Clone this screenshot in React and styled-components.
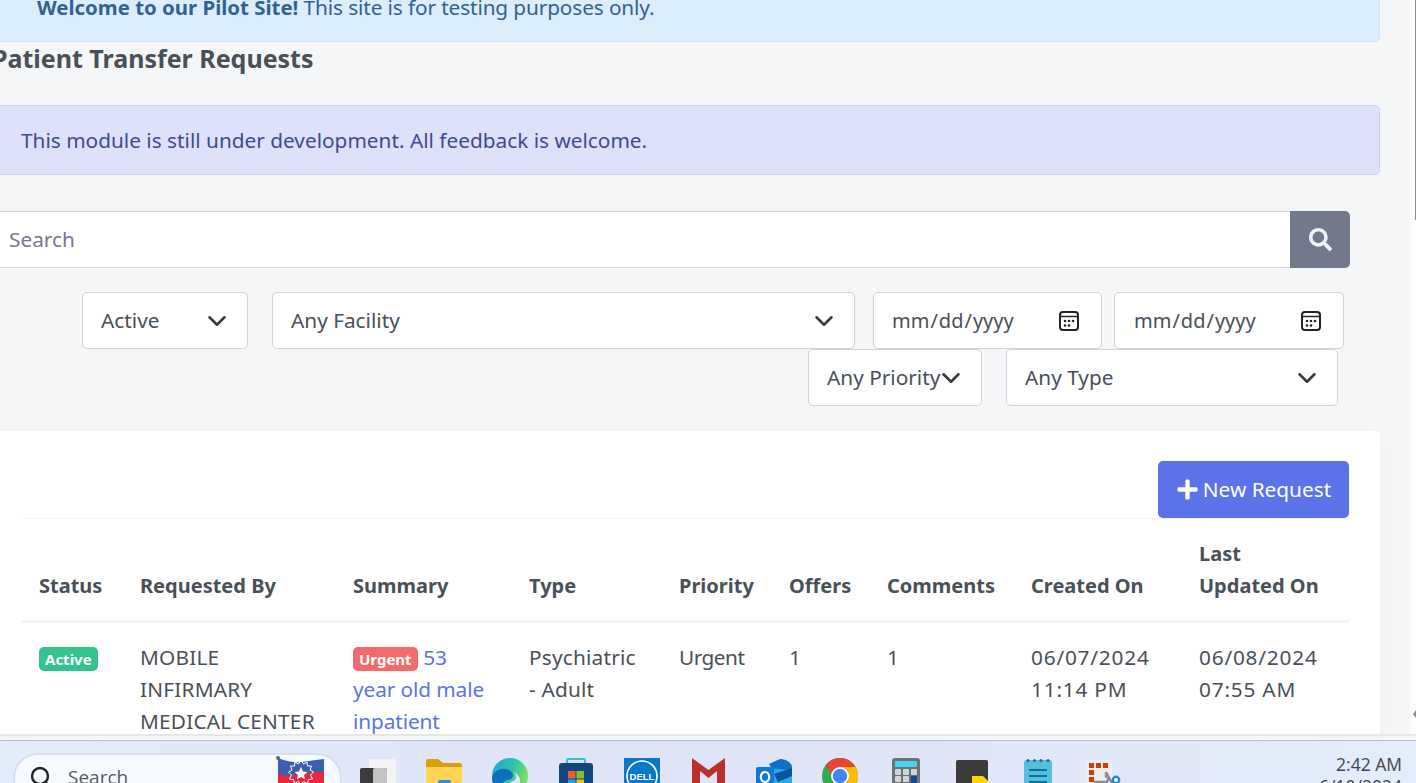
import React from 'react'
import styled, {createGlobalStyle} from 'styled-components'
import {FaSearch, FaPlus} from 'react-icons/fa'

const chevron = "data:image/svg+xml,%3csvg xmlns='http://www.w3.org/2000/svg' viewBox='0 0 16 16'%3e%3cpath fill='none' stroke='%23343a40' stroke-linecap='round' stroke-linejoin='round' stroke-width='2' d='m2 5 6 6 6-6'/%3e%3c/svg%3e"
const calendar = "data:image/svg+xml,%3csvg xmlns='http://www.w3.org/2000/svg' viewBox='0 0 20 20'%3e%3crect x='1' y='1' width='18' height='18' rx='3' fill='none' stroke='%23222' stroke-width='2'/%3e%3cpath d='M1 5.500h18' stroke='%23222' stroke-width='1.600'/%3e%3cg fill='%23222'%3e%3ccircle cx='6' cy='10' r='1.300'/%3e%3ccircle cx='10' cy='10' r='1.300'/%3e%3ccircle cx='14' cy='10' r='1.300'/%3e%3ccircle cx='6' cy='14.500' r='1.300'/%3e%3ccircle cx='10' cy='14.500' r='1.300'/%3e%3c/g%3e%3c/svg%3e"

const GlobalStyle = createGlobalStyle`
  html, body { margin: 0; padding: 0; overflow: hidden; background: #f5f6f8; }
  * { box-sizing: border-box; }
  body { font-family: "Noto Sans", "Liberation Sans", sans-serif; font-size: 20.800px; line-height: 32px; color: #495057; }
`

const Screen = styled.div`
  width: 1416px;
  height: 783px;
  display: flex;
  flex-direction: column;
  overflow: hidden;
`

const Viewport = styled.div`
  height: 736px;
  flex: none;
  display: flex;
  border-bottom: 2px solid #e7e7e7;
  background: #f5f6f8;
`

const Page = styled.main`
  width: 1410px;
  flex: none;
  overflow: hidden;
`

const Scrollbar = styled.div`
  flex: 1;
  background: #fdfdfd;
  display: flex;
  flex-direction: column;
  align-items: flex-end;
`

const Thumb = styled.div`
  width: 1px;
  height: 220px;
  background: #8b8b8b;
`

const ScrollArrow = styled.div`
  margin-top: 490px;
  width: 0;
  height: 0;
  border-top: 4px solid transparent;
  border-bottom: 4px solid transparent;
  border-right: 3px solid #8b8b8b;
`

const Content = styled.div`
  width: 1400px;
  margin: -28px 0 0 -20px;
`

const Alert = styled.div`
  height: 70px;
  padding: 18px 20px 18px ${p => p.$indent}px;
  border: 1px solid ${p => p.$border};
  border-radius: 5px;
  background: ${p => p.$bg};
  color: ${p => p.$color};
  letter-spacing: ${p => p.$track || 0}px;
  b { font-weight: 700; font-size: 20.400px; letter-spacing: 0; }
`

const Title = styled.h4`
  margin: -1px 0 30px 12px;
  height: 34px;
  font-size: 25px;
  line-height: 34px;
  font-weight: 700;
  color: #495057;
`

const SearchBar = styled.div`
  display: flex;
  height: 57px;
  margin: 36px 30px 0 0;
`

const SearchInput = styled.input`
  flex: 1;
  min-width: 0;
  padding: 0 0 2px 28px;
  border: 1px solid #ced4da;
  border-right: 0;
  border-radius: 0;
  background: #fff;
  outline: none;
  font: inherit;
  &::placeholder { color: #74788d; opacity: 1; }
`

const SearchButton = styled.button`
  width: 60px;
  border: 0;
  border-radius: 0 5px 5px 0;
  background: #74788d;
  color: #eff2f7;
  font-size: 23px;
  display: flex;
  align-items: center;
  justify-content: center;
`

const FilterRow = styled.div`
  display: flex;
  justify-content: flex-end;
  height: 57px;
  padding-right: ${p => p.$right}px;
  margin-top: ${p => p.$top || 0}px;
`

const Select = styled.select`
  appearance: none;
  width: ${p => p.$w}px;
  margin-left: ${p => p.$ml || 0}px;
  padding: 0 0 2px 18px;
  border: 1px solid #ced4da;
  border-radius: 5px;
  background: #fff url("${chevron}") no-repeat right 20px center / 20px 20px;
  color: #495057;
  font: inherit;
  outline: none;
`

const DateInput = styled.input`
  width: ${p => p.$w}px;
  margin-left: ${p => p.$ml || 0}px;
  padding: 0 22px 0 ${p => p.$pl || 17}px;
  border: 1px solid #ced4da;
  border-radius: 5px;
  background: #fff;
  color: #495057;
  font: inherit;
  font-size: 20px;
  outline: none;
  &::-webkit-calendar-picker-indicator {
    width: 20px;
    height: 20px;
    padding: 0;
    margin: 0;
    background: url("${calendar}") no-repeat center / 20px 20px;
  }
`

const Card = styled.section`
  margin-top: 25px;
  padding: 30px 31px 30px 41px;
  background: #fff;
  border-radius: 5px;
  box-shadow: 0 12px 24px rgba(18, 38, 63, 0.03);
`

const Toolbar = styled.div`
  display: flex;
  justify-content: flex-end;
  border-bottom: 1px solid #f4f4f4;
`

const NewButton = styled.button`
  width: 191px;
  height: 57px;
  padding: 0 0 2px;
  border: 0;
  border-radius: 5px;
  background: #5b73e8;
  color: #fff;
  font: inherit;
  display: flex;
  align-items: center;
  justify-content: center;
  gap: 4px;
  svg { font-size: 23px; margin-top: 2px; }
`

const Table = styled.table`
  width: 100%;
  table-layout: fixed;
  border-collapse: collapse;
`

const Th = styled.th`
  padding: 19px 18px 18px;
  border-bottom: 3px solid #f4f4f4;
  vertical-align: bottom;
  text-align: left;
  font-size: 20px;
  font-weight: 700;
`

const Td = styled.td`
  padding: 18px 18px 20px;
  vertical-align: top;
  letter-spacing: ${p => p.$track ?? 0.2}px;
`

const Badge = styled.span`
  display: inline-block;
  height: 24px;
  padding: 0 6px;
  border-radius: 5px;
  background: ${p => p.$bg};
  color: #fff;
  font-size: 15px;
  line-height: 24px;
  font-weight: 700;
  letter-spacing: 0;
`

const SummaryLink = styled.a`
  color: #5b73e8;
  letter-spacing: -0.1px;
`

const Taskbar = styled.footer`
  flex: 1;
  margin-top: 4px;
  padding: 12px 14px 0 13px;
  display: flex;
  align-items: flex-start;
  overflow: hidden;
  border-top: 1px solid #b9bdcb;
  background: linear-gradient(90deg, #e3ecfb 0%, #dfe4f7 45%, #e0e6f8 65%, #e3edfb 100%);
`

const TaskSearch = styled.div`
  width: 329px;
  height: 50px;
  flex: none;
  padding: 9px 0 0 15px;
  display: flex;
  align-items: flex-start;
  border: 2px solid #d6deee;
  border-radius: 25px;
  background: #f6f9ff;
  color: #5a5a5a;
  font-family: "Open Sans", sans-serif;
  font-size: 19px;
  line-height: 26px;
`

const SearchLabel = styled.span`
  margin-left: 16px;
  flex: 1;
`

const TaskIcons = styled.div`
  margin-left: 3px;
  display: flex;
`

const TaskIcon = styled.div`
  width: 66px;
  height: 40px;
  margin-top: 5px;
  display: flex;
  justify-content: center;
  svg { display: block; flex: none; }
`

const Clock = styled.div`
  margin: 0 0 0 auto;
  text-align: right;
  font-family: "Open Sans", sans-serif;
  font-size: 17.500px;
  line-height: 22px;
  color: #444;
`

const SearchGlyph = () => (
  <svg width="22" height="26" viewBox="0 0 22 26" style={{marginTop: 1}}>
    <circle cx="10" cy="11" r="8" fill="none" stroke="#222" strokeWidth="2.400" />
    <path d="M15.500 17l4 5" stroke="#222" strokeWidth="2.600" strokeLinecap="round" />
  </svg>
)

const Flag = () => (
  <svg width="50" height="30" viewBox="0 0 50 30" style={{marginTop: -8, marginRight: 14}}>
    <circle cx="2" cy="2" r="2" fill="#6a6170" />
    <path d="M2 2C12 6 20 7 26 6s14-2 22-3v22H2z" fill="#3b5fae" />
    <path d="M2 18c8 2 14 2 24 0s16-2 22-2v14H2z" fill="#e8283f" />
    <path d="M25 4l2.500 4 3.500-2 .5 4 4 0-1.500 4 3.500 2-3 3 2 4-4 .5-1 4-4-2-2.500 3-2.500-3-4 2-1-4-4-.5 2-4-3-3 3.500-2-1.500-4 4 0 .5-4 3.500 2z" fill="none" stroke="#fff" strokeWidth="1" />
    <path d="M25 11l2 4.500 4.500.5-3.500 3 1 4.500-4-2.500-4 2.500 1-4.500-3.500-3 4.500-.5z" fill="#fff" />
  </svg>
)

const TaskViewIcon = () => (
  <svg width="36" height="36" viewBox="0 0 36 36">
    <rect x="9" y="1" width="27" height="28" rx="2" fill="#f4f4f5" />
    <rect x="0" y="10" width="27" height="26" rx="2" fill="#3c3c3c" />
    <rect x="13" y="10" width="14" height="26" rx="2" fill="#c3c3c3" />
  </svg>
)

const FolderIcon = () => (
  <svg width="36" height="36" viewBox="0 0 36 36">
    <path d="M0 3a2 2 0 0 1 2-2h10l5 4h17a2 2 0 0 1 2 2v6H0z" fill="#d9a008" />
    <path d="M0 9h36v25a2 2 0 0 1-2 2H2a2 2 0 0 1-2-2z" fill="#ffd456" />
    <rect x="12" y="22" width="13" height="14" rx="2" fill="#2b8fd8" />
  </svg>
)

const EdgeIcon = () => (
  <svg width="36" height="36" viewBox="0 0 36 36">
    <defs>
      <linearGradient id="edgeA" x1="0" y1="0" x2="1" y2="0.4">
        <stop offset="0" stopColor="#1aa7d8" />
        <stop offset="0.6" stopColor="#30c3a8" />
        <stop offset="1" stopColor="#7ade60" />
      </linearGradient>
    </defs>
    <circle cx="18" cy="18" r="18" fill="url(#edgeA)" />
    <path d="M0 20c2-8 10-11 17-8 4 2 5 6 3 8-3 3-8 1-9 6-1 4 3 9 8 10C8 36 0 29 0 20z" fill="#0f6fb8" />
    <path d="M21 14c3 1 4 6 2 8-3 3-8 2-8 6 0 3 5 6 10 6 4 0 8-2 10-5-4 2-10 3-12 1 3-2 5-4 5-8 0-3-3-7-7-8z" fill="#e3e6f7" />
  </svg>
)

const StoreIcon = () => (
  <svg width="36" height="36" viewBox="0 0 36 36">
    <path d="M9 6V2a1 1 0 0 1 1-1h16a1 1 0 0 1 1 1v4" fill="none" stroke="#2bc4ee" strokeWidth="2" />
    <rect x="1" y="5" width="34" height="31" rx="3" fill="#11467f" />
    <rect x="10" y="13" width="7.500" height="7.500" fill="#f25a29" />
    <rect x="18.500" y="13" width="7.500" height="7.500" fill="#7fc234" />
    <rect x="10" y="21.500" width="7.500" height="7.500" fill="#1ba4ec" />
    <rect x="18.500" y="21.500" width="7.500" height="7.500" fill="#fdb813" />
  </svg>
)

const DellIcon = () => (
  <svg width="36" height="36" viewBox="0 0 36 36">
    <rect width="36" height="36" fill="#0a78c9" />
    <circle cx="18" cy="18" r="15" fill="none" stroke="#fff" strokeWidth="1.600" />
    <text x="18" y="21.500" textAnchor="middle" fill="#fff" fontFamily="Liberation Sans, sans-serif" fontSize="9.500" fontWeight="700">DELL</text>
  </svg>
)

const MailIcon = () => (
  <svg width="33" height="36" viewBox="0 0 33 36">
    <path d="M0 0l16.500 12L33 0v36h-8V13l-8.500 7L8 13v23H0z" fill="#bb2f2c" />
  </svg>
)

const OutlookIcon = () => (
  <svg width="36" height="36" viewBox="0 0 36 36">
    <path d="M13 6L24 1c6 0 12 4 12 8v4L22 22z" fill="#0f6fc6" />
    <path d="M11 10L36 12v22H11z" fill="#27a9e6" />
    <path d="M18 16l18-6v8L22 24z" fill="#0b549f" />
    <rect x="0" y="9" width="18" height="20" rx="2" fill="#0f78d4" />
    <ellipse cx="9" cy="19" rx="4.200" ry="5" fill="none" stroke="#fff" strokeWidth="2.200" />
  </svg>
)

const ChromeIcon = () => (
  <svg width="36" height="36" viewBox="0 0 36 36">
    <circle cx="18" cy="18" r="18" fill="#34a853" />
    <path d="M18 0a18 18 0 0 1 15.600 9H18a9 9 0 0 0-8.700 7L3.500 7.200A18 18 0 0 1 18 0z" fill="#ea4335" />
    <path d="M33.600 9A18 18 0 0 1 18 36l7.800-13.500A9 9 0 0 0 18 9z" fill="#fbbc05" />
    <circle cx="18" cy="18" r="9" fill="#fff" />
    <circle cx="18" cy="18" r="7.200" fill="#4285f4" />
  </svg>
)

const CalculatorIcon = () => (
  <svg width="28" height="36" viewBox="0 0 28 36">
    <rect width="28" height="36" rx="3" fill="#6d7278" />
    <rect x="3" y="3" width="22" height="6" rx="1" fill="#45d4f5" />
    <g fill="#d2d4d7">
      <rect x="3" y="11" width="6" height="6" rx="1" />
      <rect x="11" y="11" width="6" height="6" rx="1" />
      <rect x="19" y="11" width="6" height="6" rx="1" />
      <rect x="3" y="18" width="6" height="6" rx="1" />
      <rect x="11" y="18" width="6" height="6" rx="1" />
    </g>
    <rect x="19" y="18" width="6" height="14" rx="1" fill="#0f4a94" />
  </svg>
)

const StickyIcon = () => (
  <svg width="32" height="36" viewBox="0 0 32 36">
    <rect y="2" width="32" height="34" rx="2" fill="#3b3b3b" />
    <path d="M16 18h11l5 5v13H16z" fill="#ffd400" />
  </svg>
)

const NotepadIcon = () => (
  <svg width="28" height="36" viewBox="0 0 28 36">
    <rect y="2" width="28" height="34" rx="3" fill="#56c0dc" />
    <g fill="#11709b">
      <circle cx="4" cy="2.500" r="1.500" />
      <circle cx="10.500" cy="2.500" r="1.500" />
      <circle cx="17" cy="2.500" r="1.500" />
      <circle cx="24" cy="2.500" r="1.500" />
      <rect x="5" y="11" width="18" height="2" />
      <rect x="5" y="17" width="18" height="2" />
      <rect x="5" y="23" width="18" height="2" />
    </g>
  </svg>
)

const SnipIcon = () => (
  <svg width="36" height="36" viewBox="0 0 36 36">
    <rect x="0" y="2" width="26" height="26" rx="3" fill="#eceef3" />
    <g fill="#d83b01">
      <rect x="3" y="5" width="5" height="5" />
      <rect x="10" y="5" width="5" height="5" />
      <rect x="17" y="5" width="5" height="5" />
      <rect x="3" y="12" width="5" height="5" />
      <rect x="3" y="19" width="5" height="5" />
    </g>
    <path d="M8 24h10a3 3 0 0 0 2-6v-4M20 14l7 13M12 28l6-4" fill="none" stroke="#8a8d91" strokeWidth="2.400" />
    <circle cx="30" cy="22" r="3.200" fill="#fff" stroke="#1c8ad6" strokeWidth="2.400" />
  </svg>
)

const taskIcons = [TaskViewIcon, FolderIcon, EdgeIcon, StoreIcon, DellIcon, MailIcon, OutlookIcon, ChromeIcon, CalculatorIcon, StickyIcon, NotepadIcon, SnipIcon]

const columns = [101, 213, 176, 150, 110, 98, 144, 168, 168]
const headers = ['Status', 'Requested By', 'Summary', 'Type', 'Priority', 'Offers', 'Comments', 'Created On', 'Last Updated On']

export default function App() {
  return (
    <Screen>
      <GlobalStyle />
      <Viewport>
        <Page>
          <Content>
            <Alert $indent={56} $bg="#dcedfc" $border="#cbe4fb" $color="#306391" $track={-0.12}>
              <b>Welcome to our Pilot Site!</b> This site is for testing purposes only.
            </Alert>
            <Title>Patient Transfer Requests</Title>
            <Alert $indent={40} $bg="#dde2fa" $border="#ccd4f8" $color="#3f4a90">
              This module is still under development. All feedback is welcome.
            </Alert>
            <SearchBar>
              <SearchInput placeholder="Search" />
              <SearchButton aria-label="Search"><FaSearch /></SearchButton>
            </SearchBar>
            <FilterRow $right={36} $top={24}>
              <Select $w={166} defaultValue="Active"><option>Active</option></Select>
              <Select $w={583} $ml={24}><option>Any Facility</option></Select>
              <DateInput type="date" $w={229} $ml={18} />
              <DateInput type="date" $w={230} $ml={12} $pl={18} />
            </FilterRow>
            <FilterRow $right={42}>
              <Select $w={174}><option>Any Priority</option></Select>
              <Select $w={332} $ml={24}><option>Any Type</option></Select>
            </FilterRow>
            <Card>
              <Toolbar>
                <NewButton><FaPlus />New Request</NewButton>
              </Toolbar>
              <Table>
                <colgroup>
                  {columns.map((w, i) => <col key={i} width={w} />)}
                </colgroup>
                <thead>
                  <tr>{headers.map(h => <Th key={h}>{h}</Th>)}</tr>
                </thead>
                <tbody>
                  <tr>
                    <Td><Badge $bg="#34c38f">Active</Badge></Td>
                    <Td>MOBILE INFIRMARY MEDICAL CENTER</Td>
                    <Td><Badge $bg="#f46a6a">Urgent</Badge> <SummaryLink>53 year old male inpatient</SummaryLink></Td>
                    <Td>Psychiatric - Adult</Td>
                    <Td $track={-0.5}>Urgent</Td>
                    <Td>1</Td>
                    <Td>1</Td>
                    <Td $track={0.8}>06/07/2024 11:14 PM</Td>
                    <Td $track={0.8}>06/08/2024 07:55 AM</Td>
                  </tr>
                </tbody>
              </Table>
            </Card>
          </Content>
        </Page>
        <Scrollbar>
          <Thumb />
          <ScrollArrow />
        </Scrollbar>
      </Viewport>
      <Taskbar>
        <TaskSearch>
          <SearchGlyph />
          <SearchLabel>Search</SearchLabel>
          <Flag />
        </TaskSearch>
        <TaskIcons>
          {taskIcons.map((Icon, i) => <TaskIcon key={i}><Icon /></TaskIcon>)}
        </TaskIcons>
        <Clock>2:42 AM<br />6/10/2024</Clock>
      </Taskbar>
    </Screen>
  )
}
